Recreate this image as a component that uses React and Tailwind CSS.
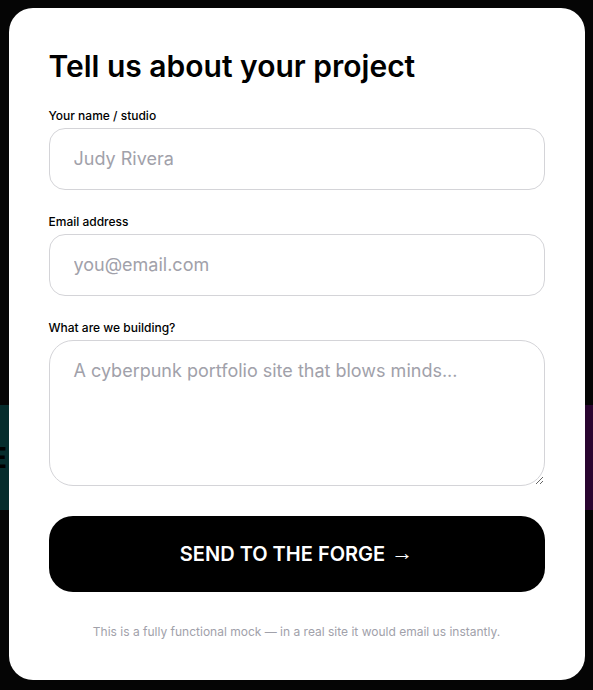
import React, { useState } from 'react'

export default function App() {
  const [form, setForm] = useState({ name: '', email: '', project: '' })
  const [sent, setSent] = useState(false)

  const handleChange = (e) => {
    const { name, value } = e.target
    setForm(prev => ({ ...prev, [name]: value }))
  }

  const handleSubmit = (e) => {
    e.preventDefault()
    setSent(true)
  }

  return (
    <div className="relative min-h-screen w-full overflow-hidden bg-[#050505] font-['Inter',sans-serif]">
      {/* page content peeking out behind the modal */}
      <div className="absolute left-0 right-0 top-[405px] h-[105px] flex">
        <div className="w-1/2 bg-[#052c2c] flex items-center">
          <span className="text-[28px] font-bold text-black leading-none -ml-[10px]">E</span>
        </div>
        <div className="w-1/2 bg-[#2a0530]" />
      </div>

      <div className="relative z-10 flex justify-center pt-2">
        <div className="w-full max-w-xl bg-white rounded-3xl p-10">
          <h2 className="text-3xl font-semibold text-black mb-5">Tell us about your project</h2>

          <form onSubmit={handleSubmit} className="flex flex-col gap-5">
            <div>
              <label className="block text-xs leading-6 font-medium text-black">Your name / studio</label>
              <input
                type="text"
                name="name"
                value={form.name}
                onChange={handleChange}
                placeholder="Judy Rivera"
                className="block w-full border border-[#d4d4d8] rounded-2xl px-6 py-4 text-lg leading-7 text-black placeholder:text-[#a1a1aa] focus:outline-none"
              />
            </div>

            <div>
              <label className="block text-xs leading-6 font-medium text-black">Email address</label>
              <input
                type="email"
                name="email"
                value={form.email}
                onChange={handleChange}
                placeholder="you@email.com"
                className="block w-full border border-[#d4d4d8] rounded-2xl px-6 py-4 text-lg leading-7 text-black placeholder:text-[#a1a1aa] focus:outline-none"
              />
            </div>

            <div>
              <label className="block text-xs leading-6 font-medium text-black">What are we building?</label>
              <textarea
                name="project"
                rows={4}
                value={form.project}
                onChange={handleChange}
                placeholder="A cyberpunk portfolio site that blows minds..."
                className="block w-full border border-[#d4d4d8] rounded-3xl px-6 py-4 text-lg leading-7 text-black placeholder:text-[#a1a1aa] focus:outline-none"
              />
            </div>

            <button
              type="submit"
              className="mt-2.5 w-full h-[76px] flex items-center justify-center gap-[6px] bg-black text-white rounded-3xl text-xl leading-7 font-semibold uppercase cursor-pointer"
            >
              {sent ? 'Sent!' : (
                <>
                  <span>Send to the forge</span>
                  <span className="font-['Liberation_Sans',sans-serif] font-normal text-[22px] leading-none -mt-[3px]">→</span>
                </>
              )}
            </button>
          </form>

          <p className="mt-8 text-center text-xs leading-4 text-[#a1a1aa]">
            This is a fully functional mock — in a real site it would email us instantly.
          </p>
        </div>
      </div>
    </div>
  )
}
